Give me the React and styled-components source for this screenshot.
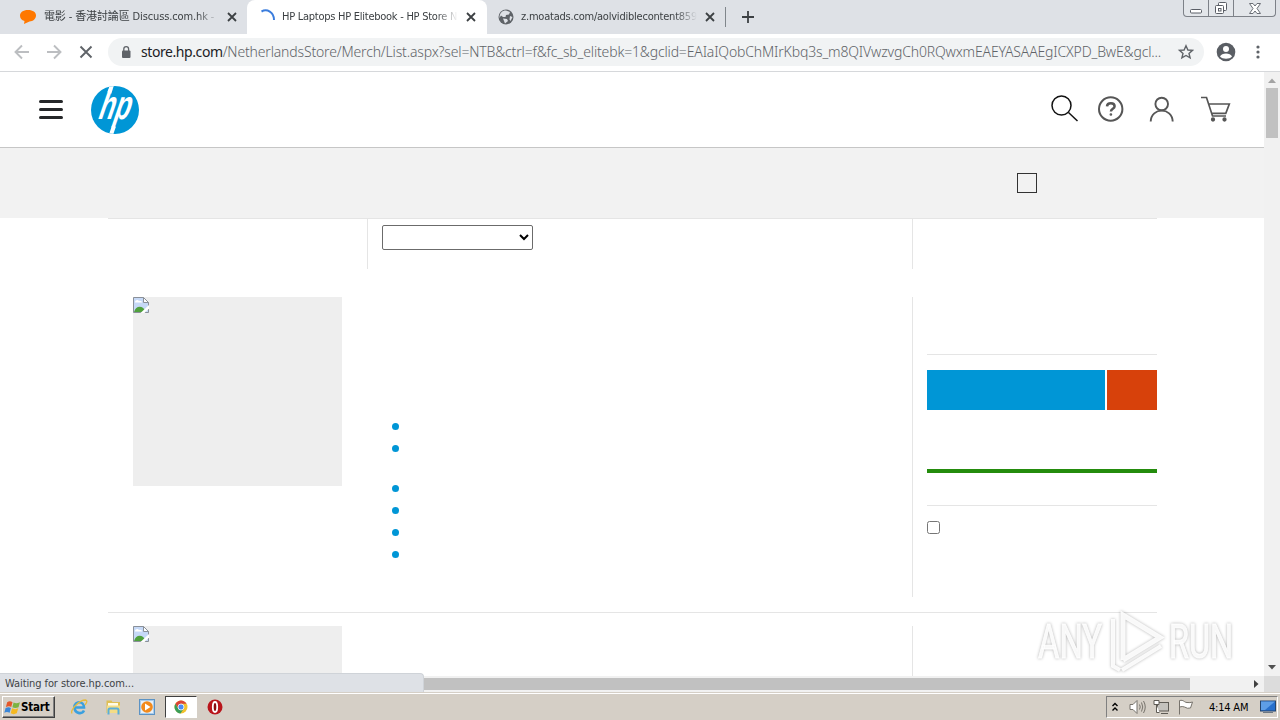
import React from "react";
import styled, { createGlobalStyle } from "styled-components";

const GlobalStyle = createGlobalStyle`
  * {
    box-sizing: border-box;
  }
  body {
    margin: 0;
    overflow: hidden;
    background: #fff;
    font-family: "DejaVu Sans Condensed", "DejaVu Sans", "Noto Sans CJK TC", sans-serif;
  }
  svg {
    display: block;
    flex: none;
  }
`;

const Screen = styled.div`
  position: relative;
  width: 1280px;
  height: 720px;
  display: flex;
  flex-direction: column;
  overflow: hidden;
`;

/* browser chrome */
const TabStrip = styled.div`
  height: 34px;
  flex: none;
  display: flex;
  background: #dee1e6;
`;

const Tab = styled.div`
  width: ${(p) => p.$width}px;
  height: 34px;
  padding-left: ${(p) => p.$pad}px;
  display: flex;
  align-items: center;
  background: ${(p) => (p.$active ? "#fff" : "transparent")};
  border-radius: 8px 8px 0 0;
`;

const TabTitle = styled.div`
  width: ${(p) => p.$width}px;
  margin-left: ${(p) => p.$gap}px;
  margin-right: 8px;
  font-size: 11px;
  line-height: 16px;
  letter-spacing: ${(p) => p.$spacing}px;
  color: #3c4043;
  white-space: nowrap;
  mask-image: linear-gradient(to right, #000 calc(100% - 22px), transparent);
`;

const TabSeparator = styled.div`
  width: 1px;
  height: 20px;
  margin: 7px 16px 0 0;
  background: #80868b;
`;

const NewTab = styled.div`
  padding-top: 11px;
`;

const WindowButtons = styled.div`
  width: 93px;
  height: 17px;
  margin: 0 4px 0 auto;
  display: flex;
  border: 1px solid #7d8188;
  border-top: 0;
  border-radius: 0 0 4px 4px;
  background: #e3e6ea;
`;

const WindowButton = styled.div`
  width: ${(p) => p.$width}px;
  display: flex;
  align-items: center;
  justify-content: center;
  border-right: ${(p) => (p.$last ? "0" : "1px solid #7d8188")};
`;

const Toolbar = styled.div`
  height: 38px;
  flex: none;
  display: flex;
  align-items: center;
  padding: 0 13px 2px 12px;
  border-bottom: 1px solid #d6d8db;
  background: #fff;
`;

const NavIcons = styled.div`
  width: 96px;
  display: flex;
  gap: 12px;
`;

const Omnibox = styled.div`
  width: 1096px;
  height: 28px;
  padding: 0 10px 0 12px;
  display: flex;
  align-items: center;
  border-radius: 14px;
  background: #f1f3f4;
`;

const Url = styled.div`
  width: 1030px;
  margin-left: 9px;
  font-size: 14px;
  line-height: 20px;
  font-family: "Noto Sans", sans-serif;
  font-weight: 300;
  letter-spacing: -0.16px;
  color: #5f6368;
  white-space: nowrap;
  b {
    font-weight: 400;
    letter-spacing: -0.42px;
    color: #202124;
  }
`;

const ToolbarEnd = styled.div`
  display: flex;
  align-items: center;
  gap: 13px;
  margin-left: 12px;
`;

/* page */
const Viewport = styled.div`
  height: 604px;
  flex: none;
  display: flex;
`;

const Page = styled.div`
  width: 1264px;
  overflow: hidden;
`;

const SiteHeader = styled.div`
  height: 76px;
  display: flex;
  align-items: center;
  padding: 0 33px 0 39px;
  border-bottom: 1px solid #c6c6c6;
`;

const Burger = styled.div`
  width: 24px;
  display: flex;
  flex-direction: column;
  gap: 5px;
  margin-right: 28px;
  span {
    height: 3px;
    border-radius: 1.5px;
    background: #252729;
  }
`;

const HeaderIcons = styled.div`
  display: flex;
  align-items: center;
  margin-left: auto;
  padding-bottom: 2px;
`;

const FilterBand = styled.div`
  height: 70px;
  padding: 25px 227px 0 0;
  display: flex;
  justify-content: flex-end;
  background: #f2f2f2;
`;

const Square = styled.div`
  width: 20px;
  height: 20px;
  border: 1px solid #333;
`;

const Listing = styled.div`
  width: 1049px;
  margin-left: 108px;
`;

const SortRow = styled.div`
  height: 51px;
  display: flex;
  border-top: 1px solid #e5e5e5;
`;

const SortLeft = styled.div`
  width: 260px;
  border-right: 1px solid #e5e5e5;
`;

const SortMiddle = styled.div`
  width: 545px;
  padding: 6px 0 0 14px;
  border-right: 1px solid #e5e5e5;
`;

const SortSelect = styled.select`
  display: block;
  width: 151px;
  height: 25px;
  border: 1px solid #6b6b6b;
  border-radius: 2px;
  background: #fff;
`;

const Product = styled.div`
  height: ${(p) => p.$height}px;
  margin-top: ${(p) => p.$top}px;
  display: flex;
`;

const Thumb = styled.div`
  width: 209px;
  height: 189px;
  margin: 0 25px;
  flex: none;
  background: #eee;
`;

const Specs = styled.ul`
  width: 546px;
  margin: 0;
  padding: 119px 0 0 25px;
  list-style: none;
  border-right: 1px solid #e5e5e5;
`;

const Spec = styled.li`
  height: ${(p) => (p.$tall ? 40 : 22)}px;
  padding-top: 7px;
  &::before {
    content: "";
    display: block;
    width: 7px;
    height: 7px;
    border-radius: 50%;
    background: #0096d6;
  }
`;

const Buy = styled.div`
  width: 230px;
  margin-left: 14px;
  padding-top: 57px;
`;

const Rule = styled.div`
  height: 1px;
  background: #e5e5e5;
`;

const BuyButtons = styled.div`
  display: flex;
  gap: 2px;
  margin: 15px 0 59px;
`;

const BuyButton = styled.div`
  width: ${(p) => p.$width}px;
  height: 40px;
  background: ${(p) => p.$color};
`;

const StockBar = styled.div`
  height: 4px;
  margin-bottom: 32px;
  background: #248c0d;
`;

const Compare = styled.input`
  display: block;
  width: 13px;
  height: 13px;
  margin: 15px 0 0;
`;

const Divider = styled.div`
  height: 1px;
  margin-top: 15px;
  background: #e5e5e5;
`;

const VScroll = styled.div`
  width: 16px;
  display: flex;
  flex-direction: column;
  align-items: center;
  justify-content: space-between;
  background: #f1f1f1;
`;

const VThumb = styled.div`
  width: 12px;
  height: 50px;
  margin-bottom: auto;
  background: #c1c1c1;
`;

const HScroll = styled.div`
  height: 16px;
  flex: none;
  display: flex;
  align-items: center;
  background: #f1f1f1;
`;

const HThumb = styled.div`
  width: 766px;
  height: 12px;
  margin-left: 424px;
  background: #c1c1c1;
`;

const HArrow = styled.div`
  width: 74px;
  display: flex;
  justify-content: flex-end;
`;

const Corner = styled.div`
  width: 16px;
  height: 16px;
  background: #dcdcdc;
`;

const StatusBubble = styled.div`
  position: absolute;
  left: 0;
  top: 673px;
  width: 424px;
  height: 19px;
  padding-left: 5px;
  border: 1px solid #cfd3d8;
  border-left: 0;
  border-bottom: 0;
  border-radius: 0 4px 0 0;
  background: #dee1e6;
  color: #3f4347;
  font-size: 11px;
  line-height: 19px;
  letter-spacing: -0.09px;
`;

const Watermark = styled.svg`
  position: absolute;
  left: 1030px;
  top: 600px;
  filter: drop-shadow(0 0 1.5px rgba(0, 0, 0, 0.32));
`;

/* taskbar */
const Taskbar = styled.div`
  height: 28px;
  flex: none;
  display: flex;
  align-items: flex-start;
  padding: 3px 1px 0 2px;
  border-top: 1px solid #d5cfc6;
  box-shadow: inset 0 1px #fff;
  background: #d5cfc6;
`;

const StartButton = styled.div`
  width: 53px;
  height: 22px;
  padding: 0 0 0 1px;
  display: flex;
  align-items: center;
  border: 1px solid;
  border-color: #fff #404040 #404040 #fff;
  box-shadow: inset -1px -1px #808080;
  font: bold 11.5px "DejaVu Sans Condensed", "DejaVu Sans", sans-serif;
  letter-spacing: -0.2px;
  color: #000;
`;

const QuickItem = styled.div`
  width: ${(p) => (p.$active ? 32 : 24)}px;
  height: 22px;
  margin-left: ${(p) => p.$gap}px;
  display: flex;
  align-items: center;
  justify-content: center;
  border: 1px solid;
  border-color: ${(p) => (p.$active ? "#404040 #fff #fff #404040" : "transparent")};
  background: ${(p) => (p.$active ? "#fff" : "transparent")};
`;

const Tray = styled.div`
  width: 172px;
  height: 22px;
  margin: 0 1px 0 auto;
  padding: 0 1px 0 4px;
  display: flex;
  align-items: center;
  border: 1px solid;
  border-color: #808080 #fff #fff #808080;
`;

const Clock = styled.div`
  width: 44px;
  margin: 0 7px 0 15px;
  font-size: 11px;
  letter-spacing: -0.2px;
  white-space: nowrap;
  color: #000;
`;

const CloseIcon = () => (
  <svg width="10" height="10" viewBox="0 0 10 10" stroke="#3c4043" strokeWidth="1.8">
    <path d="M1 1l8 8M9 1l-8 8" />
  </svg>
);

const BrokenImage = () => (
  <svg width="16" height="16" viewBox="0 0 16 16">
    <path d="M.5.5h10l5 5v10H.5z" fill="#c6d9f7" stroke="#8a9099" />
    <path d="M2 5c0-2 3-3 4-1 2-.6 3 .4 3 1.500H2z" fill="#fff" />
    <path d="M1 15c2-7 9-7 12 0z" fill="#4fa13d" />
    <path d="M10.500.5v5h5z" fill="#fff" stroke="#8a9099" />
    <path d="M7.500 16L16 8v3.500L11.500 16z" fill="#fff" />
  </svg>
);

const Arrow = ({ d, color }) => (
  <svg width="16" height="16" viewBox="0 0 16 16">
    <path d={d} fill={color} />
  </svg>
);

const HpLogo = () => (
  <svg width="48" height="48" viewBox="0 0 48 48">
    <defs>
      <clipPath id="disc">
        <circle cx="24" cy="24" r="24" />
      </clipPath>
    </defs>
    <circle cx="24" cy="24" r="24" fill="#0096d6" />
    <g clipPath="url(#disc)">
      <path d="M21.600 -3L18.300 7M23 40L19.200 51" stroke="#fff" strokeWidth="4" />
      <text
        transform="translate(5.500 33) skewX(-19) scale(.63 1)"
        fill="#fff"
        fontFamily="Liberation Sans"
        fontWeight="bold"
        fontSize="41"
      >
        hp
      </text>
    </g>
  </svg>
);

const Icons = () => (
  <HeaderIcons>
    <svg width="28" height="28" viewBox="0 0 28 28" fill="none" stroke="#111" strokeWidth="1.500">
      <circle cx="10.500" cy="10.500" r="9.500" />
      <path d="M17.500 17.500L26.500 26" />
    </svg>
    <svg width="45" height="26" viewBox="-19 0 45 26" fill="none" stroke="#565656">
      <circle cx="12.700" cy="13" r="11.700" strokeWidth="2" />
      <path d="M9 10.400c.2-4.400 7.600-4.200 7.600-.2 0 2.700-3.700 2.300-3.700 5.300" strokeWidth="2.500" />
      <circle cx="12.900" cy="18.500" r=".6" strokeWidth="1.500" />
    </svg>
    <svg width="51" height="26" viewBox="-25 0 51 26" fill="none" stroke="#565656" strokeWidth="1.900">
      <circle cx="12.700" cy="8" r="6.300" />
      <path d="M1.700 25.500C2.200 11 23.200 11 23.700 25.500" />
    </svg>
    <svg width="56" height="26" viewBox="-26 0 56 26" fill="none" stroke="#565656" strokeWidth="1.700">
      <path d="M0 1.500h5.500L11.500 20H25M7.500 8h20.800l-3.500 9.300H10.800" />
      <circle cx="12" cy="23.500" r="1.300" fill="#565656" />
      <circle cx="23.500" cy="23.500" r="1.300" fill="#565656" />
    </svg>
  </HeaderIcons>
);

const App = () => {
  return (
    <Screen>
      <GlobalStyle />
      <TabStrip>
        <Tab $width={247} $pad={20}>
          <svg width="16" height="14" viewBox="0 0 16 14">
            <path d="M8 0c5 0 8 2.300 8 5.500S13 11.500 9.500 11.500L4 14l.5-3C1.500 10.300 0 8.300 0 5.800 0 2.300 3 0 8 0z" fill="#ff7800" />
          </svg>
          <TabTitle $width={175} $gap={8} $spacing={-0.13}>電影 - 香港討論區 Discuss.com.hk -</TabTitle>
          <CloseIcon />
        </Tab>
        <Tab $width={240} $pad={13} $active>
          <svg width="16" height="16" viewBox="0 0 16 16" fill="none">
            <path d="M1.500 2.500C7-.5 14 3 14 11" stroke="#3b7ddd" strokeWidth="2" />
          </svg>
          <TabTitle $width={176} $gap={6} $spacing={-0.26}>HP Laptops HP Elitebook - HP Store N</TabTitle>
          <CloseIcon />
        </Tab>
        <Tab $width={238} $pad={11}>
          <svg width="16" height="16" viewBox="0 0 16 16">
            <circle cx="8" cy="8" r="7.500" fill="#5f6368" />
            <path d="M8 1.500L12 3l-1 2.500-3 .5-.5 2H5L3 6.500 1.500 9C1.500 4 4 1.500 8 1.500zM5 9.500l4 .5 1 2-3 2.500L6 12zM12 7l2.500 1-2 4-1-1.500z" fill="#dee1e6" />
          </svg>
          <TabTitle $width={176} $gap={7} $spacing={-0.22}>z.moatads.com/aolvidiblecontent859</TabTitle>
          <CloseIcon />
        </Tab>
        <TabSeparator />
        <NewTab>
          <svg width="12" height="12" viewBox="0 0 12 12" stroke="#3c4043" strokeWidth="1.800">
            <path d="M6 0v12M0 6h12" />
          </svg>
        </NewTab>
        <WindowButtons>
          <WindowButton $width={25}>
            <svg width="12" height="14" viewBox="0 0 12 14">
              <rect x=".5" y="8.500" width="11" height="3.500" rx="1" fill="#fff" stroke="#5a5e66" />
            </svg>
          </WindowButton>
          <WindowButton $width={25}>
            <svg width="13" height="13" viewBox="0 0 13 13" fill="#fff" stroke="#5a5e66">
              <rect x="3.500" y=".5" width="8" height="8" rx="1" />
              <rect x=".5" y="3.500" width="8" height="8" rx="1" />
              <rect x="3.500" y="6.500" width="2.500" height="2.500" />
            </svg>
          </WindowButton>
          <WindowButton $width={41} $last>
            <svg width="12" height="11" viewBox="0 0 12 11">
              <path d="M.5.5H4l2 2.500L8 .5h3.500L8 5.500l3.500 5H8L6 8l-2 2.500H.5l3.500-5z" fill="#fff" stroke="#6a6e76" />
            </svg>
          </WindowButton>
        </WindowButtons>
      </TabStrip>

      <Toolbar>
        <NavIcons>
          <svg width="20" height="20" viewBox="0 0 20 20" fill="none" stroke="#bcbec1" strokeWidth="1.900">
            <path d="M17 10H4M10 3.500L3.500 10l6.500 6.500" />
          </svg>
          <svg width="20" height="20" viewBox="0 0 20 20" fill="none" stroke="#bcbec1" strokeWidth="1.900">
            <path d="M3 10h13M10 3.500l6.500 6.500-6.500 6.500" />
          </svg>
          <svg width="20" height="20" viewBox="0 0 20 20" fill="none" stroke="#5f6368" strokeWidth="1.900">
            <path d="M4.500 4.500l11 11M15.500 4.500l-11 11" />
          </svg>
        </NavIcons>
        <Omnibox>
          <svg width="12" height="14" viewBox="0 0 12 14">
            <rect x="2" y="5.500" width="8.500" height="7.500" rx="1" fill="#5f6368" />
            <path d="M3.800 6V4a2.400 2.400 0 0 1 4.800 0v2" fill="none" stroke="#5f6368" strokeWidth="1.300" />
          </svg>
          <Url>
            <b>store.hp.com</b>/NetherlandsStore/Merch/List.aspx?sel=NTB&amp;ctrl=f&amp;fc_sb_elitebk=1&amp;gclid=EAIaIQobChMIrKbq3s_m8QIVwzvgCh0RQwxmEAEYASAAEgICXPD_BwE&amp;gcl...
          </Url>
          <svg width="23" height="16" viewBox="-7 0 23 16">
            <path d="M8 1.800l1.900 4.200 4.600.4-3.500 3 1.100 4.500L8 11.500l-4.100 2.400L5 9.400l-3.500-3L6.100 6z" fill="none" stroke="#5f6368" strokeWidth="1.400" />
          </svg>
        </Omnibox>
        <ToolbarEnd>
          <svg width="20" height="20" viewBox="0 0 20 20">
            <circle cx="10" cy="10" r="9.300" fill="#5a5e64" />
            <circle cx="10" cy="7" r="3" fill="#fff" />
            <path d="M4 14.500c1.500-4 10.500-4 12 0-2.500 3-9.500 3-12 0z" fill="#fff" />
          </svg>
          <svg width="18" height="18" viewBox="0 0 18 18" fill="#5f6368">
            <circle cx="9" cy="4" r="1.600" />
            <circle cx="9" cy="9" r="1.600" />
            <circle cx="9" cy="14" r="1.600" />
          </svg>
        </ToolbarEnd>
      </Toolbar>

      <Viewport>
        <Page>
          <SiteHeader>
            <Burger>
              <span />
              <span />
              <span />
            </Burger>
            <HpLogo />
            <Icons />
          </SiteHeader>
          <FilterBand>
            <Square />
          </FilterBand>
          <Listing>
            <SortRow>
              <SortLeft />
              <SortMiddle>
                <SortSelect />
              </SortMiddle>
            </SortRow>
            <Product $top={28} $height={300}>
              <Thumb>
                <BrokenImage />
              </Thumb>
              <Specs>
                <Spec />
                <Spec $tall />
                <Spec />
                <Spec />
                <Spec />
                <Spec />
              </Specs>
              <Buy>
                <Rule />
                <BuyButtons>
                  <BuyButton $width={178} $color="#0096d6" />
                  <BuyButton $width={50} $color="#d7410b" />
                </BuyButtons>
                <StockBar />
                <Rule />
                <Compare type="checkbox" />
              </Buy>
            </Product>
            <Divider />
            <Product $top={13} $height={300}>
              <Thumb>
                <BrokenImage />
              </Thumb>
              <Specs />
            </Product>
          </Listing>
        </Page>
        <VScroll>
          <Arrow d="M4 11h8L8 6.500z" color="#a3a3a3" />
          <VThumb />
          <Arrow d="M4 5h8L8 9.500z" color="#505050" />
        </VScroll>
      </Viewport>
      <HScroll>
        <HThumb />
        <HArrow>
          <Arrow d="M6 4v8l4.500-4z" color="#404040" />
        </HArrow>
        <Corner />
      </HScroll>

      <Taskbar>
        <StartButton>
          <svg width="17" height="17" viewBox="0 0 16 16">
            <path d="M3 3c2-1.500 3.500-1 5 0L6.800 7.500C5.500 6.500 4 6.500 1.800 7.500z" fill="#e4572a" />
            <path d="M9 3.300c2 1 3.500 1 6-.3l-1.300 4.800c-2 1-4 1-5.800 0z" fill="#7cb342" />
            <path d="M1.500 8.500c2-1 3.500-1 5 0L5.300 13C3.500 12 2 12 .3 13z" fill="#3a86d8" />
            <path d="M7.600 8.800c2 1 3.800 1 5.800 0L12 13.500c-2 1-4 1-5.700 0z" fill="#f5b921" />
          </svg>
          Start
        </StartButton>
        <QuickItem $gap={12}>
          <svg width="18" height="18" viewBox="0 0 18 18" fill="none">
            <path d="M14 12.500c-2 4-9.500 3.500-9.500-3.500 0-6.500 9.500-6.500 9.500 0.500H5" stroke="#3aa0df" strokeWidth="2.600" />
            <path d="M2 15.500C0 12 9 2 15.500 2c2.500.5 1 3-.5 5" stroke="#e6bb3c" strokeWidth="1.300" />
          </svg>
        </QuickItem>
        <QuickItem $gap={10}>
          <svg width="17" height="17" viewBox="0 0 17 17">
            <path d="M1.500 1.500h5l1 1.500H15v11H1.500z" fill="#dfbf55" />
            <path d="M3 4h10v3H3z" fill="#fffbe6" />
            <path d="M2 6.500h13V14H2z" fill="#f3dc86" />
            <path d="M3.500 15.500v-4.500q0-1.500 1.500-1.500h7q1.500 0 1.500 1.500v4.500" fill="none" stroke="#5aaed8" strokeWidth="2" />
          </svg>
        </QuickItem>
        <QuickItem $gap={10}>
          <svg width="16" height="16" viewBox="0 0 16 16">
            <rect x=".5" y=".5" width="15" height="15" fill="#a9cdec" stroke="#5c93c4" />
            <rect x="2" y="2" width="12" height="12" fill="#e8f0f8" />
            <circle cx="8" cy="8" r="5.800" fill="#f28a1c" />
            <path d="M6 4.500v7l5.500-3.500z" fill="#fff" />
          </svg>
        </QuickItem>
        <QuickItem $gap={6} $active>
          <svg width="14" height="14" viewBox="0 0 14 14">
            <circle cx="7" cy="7" r="6.500" fill="#f2c12e" />
            <path d="M1.400 3.700A6.500 6.500 0 0 1 12.600 3.800H7L4.200 8.600z" fill="#dc4437" />
            <path d="M1.400 3.700A6.500 6.500 0 0 0 6.500 13.500L9.800 8.600 4.200 8.600z" fill="#3a9d58" />
            <circle cx="7" cy="7" r="3" fill="#4b8bf5" stroke="#fff" strokeWidth=".8" />
          </svg>
        </QuickItem>
        <QuickItem $gap={6}>
          <svg width="16" height="16" viewBox="0 0 16 16">
            <circle cx="8" cy="8" r="7.500" fill="#b9151b" />
            <ellipse cx="8" cy="8" rx="2.200" ry="5" fill="#8a0d10" stroke="#fff" strokeWidth="1.800" />
          </svg>
        </QuickItem>
        <Tray>
          <svg width="8" height="10" viewBox="0 0 8 10" fill="none" stroke="#000" strokeWidth="1.400">
            <path d="M1.500 4L4 1.500 6.500 4M1.500 8.500L4 6l2.500 2.500" />
          </svg>
          <svg width="27" height="16" viewBox="-10 0 27 16" fill="none" stroke="#77736c">
            <path d="M1 5.500h3l4-4v13l-4-4H1z" fill="#fff" />
            <path d="M10.500 5.500q1.500 2.500 0 5M12.500 3.500q2.500 4.500 0 9M14.500 2q3.500 6 0 12" />
          </svg>
          <svg width="24" height="16" viewBox="-7 0 24 16" fill="#fff" stroke="#5e5b55">
            <rect x="4.500" y="3.500" width="11" height="8.500" fill="#c4c2bd" />
            <path d="M1 1.500h5v4H1zM3.500 5.500v8h3M8 14.500h7" />
          </svg>
          <svg width="24" height="16" viewBox="-7 0 24 16" fill="#fff" stroke="#77736c">
            <path d="M2.500 15.500V1.500C7 .5 7 3.500 10 3.500q3 .5 5.500-.5l-2 6q-3 1-6-1-2-1-5 0" />
          </svg>
          <Clock>4:14 AM</Clock>
          <svg width="16" height="14" viewBox="0 0 16 14">
            <rect x=".5" y="1" width="15" height="10" fill="#2870cc" stroke="#24456e" />
            <path d="M1 1.500h14L5 10H1z" fill="#5e9ee6" />
            <path d="M3 12.500h10" stroke="#6d7782" />
          </svg>
        </Tray>
      </Taskbar>

      <StatusBubble>Waiting for store.hp.com...</StatusBubble>

      <Watermark width="210" height="80" viewBox="0 0 210 80">
        <g fill="#fff" fillOpacity="0.9" stroke="#fff" strokeOpacity="0.9" strokeWidth="1" fontFamily="Roboto" fontSize="48">
          <text x="8" y="58" textLength="64" lengthAdjust="spacingAndGlyphs">ANY</text>
          <text x="139" y="58" textLength="64" lengthAdjust="spacingAndGlyphs">RUN</text>
        </g>
        <g fill="none" stroke="#fff" strokeOpacity="0.9" strokeWidth="5">
          <path d="M93 60V15L130 37.500 93 60" />
          <path d="M92 70L131 46M83 19v47l7 4" strokeWidth="4" />
        </g>
      </Watermark>
    </Screen>
  );
};

export default App;
